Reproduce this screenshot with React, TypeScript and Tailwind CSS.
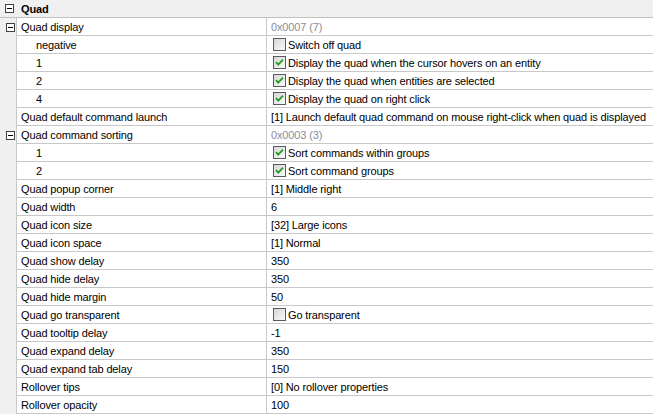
type Row = {
  label: string;
  value: string;
  sub?: boolean;
  group?: boolean;
  check?: boolean;
  checked?: boolean;
  dim?: boolean;
};

const rows: Row[] = [
  { label: 'Quad display', value: '0x0007 (7)', group: true, dim: true },
  { label: 'negative', value: 'Switch off quad', sub: true, check: true },
  { label: '1', value: 'Display the quad when the cursor hovers on an entity', sub: true, check: true, checked: true },
  { label: '2', value: 'Display the quad when entities are selected', sub: true, check: true, checked: true },
  { label: '4', value: 'Display the quad on right click', sub: true, check: true, checked: true },
  { label: 'Quad default command launch', value: '[1] Launch default quad command on mouse right-click when quad is displayed' },
  { label: 'Quad command sorting', value: '0x0003 (3)', group: true, dim: true },
  { label: '1', value: 'Sort commands within groups', sub: true, check: true, checked: true },
  { label: '2', value: 'Sort command groups', sub: true, check: true, checked: true },
  { label: 'Quad popup corner', value: '[1] Middle right' },
  { label: 'Quad width', value: '6' },
  { label: 'Quad icon size', value: '[32] Large icons' },
  { label: 'Quad icon space', value: '[1] Normal' },
  { label: 'Quad show delay', value: '350' },
  { label: 'Quad hide delay', value: '350' },
  { label: 'Quad hide margin', value: '50' },
  { label: 'Quad go transparent', value: 'Go transparent', check: true },
  { label: 'Quad tooltip delay', value: '-1' },
  { label: 'Quad expand delay', value: '350' },
  { label: 'Quad expand tab delay', value: '150' },
  { label: 'Rollover tips', value: '[0] No rollover properties' },
  { label: 'Rollover opacity', value: '100' },
];

function Minus() {
  return (
    <svg width="9" height="9" viewBox="0 0 9 9" className="block">
      <rect x="0.5" y="0.5" width="8" height="8" fill="#fff" stroke="#404040" />
      <line x1="2" y1="4.5" x2="7" y2="4.5" stroke="#000" />
    </svg>
  );
}

function CheckBox({ checked }: { checked?: boolean }) {
  return (
    <svg width="13" height="13" viewBox="0 0 13 13" className="block shrink-0">
      <defs>
        <linearGradient id="cb" x1="0" y1="0" x2="1" y2="1">
          <stop offset="0" stopColor="#d6d6d6" />
          <stop offset="1" stopColor="#fbfbfb" />
        </linearGradient>
      </defs>
      <rect x="0.5" y="0.5" width="12" height="12" fill="url(#cb)" stroke="#5a5a5a" />
      {checked && (
        <path d="M3 6.2 L5.2 8.6 L10 3.6" fill="none" stroke="#21a121" strokeWidth="1.8" />
      )}
    </svg>
  );
}

export default function App() {
  return (
    <div className="w-[653px] h-[416px] overflow-hidden bg-white text-[11px] tracking-[-0.13px] text-black font-['Liberation_Sans',Arial,sans-serif] leading-none">
      {/* Category header */}
      <div className="h-[18px] flex items-center bg-[#f0f0f0] border-b border-[#c0c0c0]">
        <div className="w-[21px] pl-[5px]">
          <Minus />
        </div>
        <span className="font-bold pt-[1px]">Quad</span>
      </div>

      {rows.map((r, i) => (
        <div key={i} className="flex h-[18px]">
          <div className="w-[17px] shrink-0 bg-[#f0f0f0] flex items-center justify-end pr-[1px] border-r border-[#c8c8c8]">
            {r.group && <Minus />}
          </div>
          <div
            className={
              'w-[250px] shrink-0 flex items-center pt-[2px] border-b border-r border-[#c8c8c8] ' +
              (r.sub ? 'pl-[19px]' : 'pl-[4px]')
            }
          >
            {r.label}
          </div>
          <div
            className={
              'flex-1 min-w-0 flex items-center border-b border-[#c8c8c8] whitespace-nowrap ' +
              (r.check ? 'pl-[6px] gap-[2px]' : 'pl-[4px] pt-[2px]') +
              (r.dim ? ' text-[#8c8c9c]' : '')
            }
          >
            {r.check && <CheckBox checked={r.checked} />}
            <span className={r.check ? 'pt-[2px]' : ''}>{r.value}</span>
          </div>
        </div>
      ))}
    </div>
  );
}
